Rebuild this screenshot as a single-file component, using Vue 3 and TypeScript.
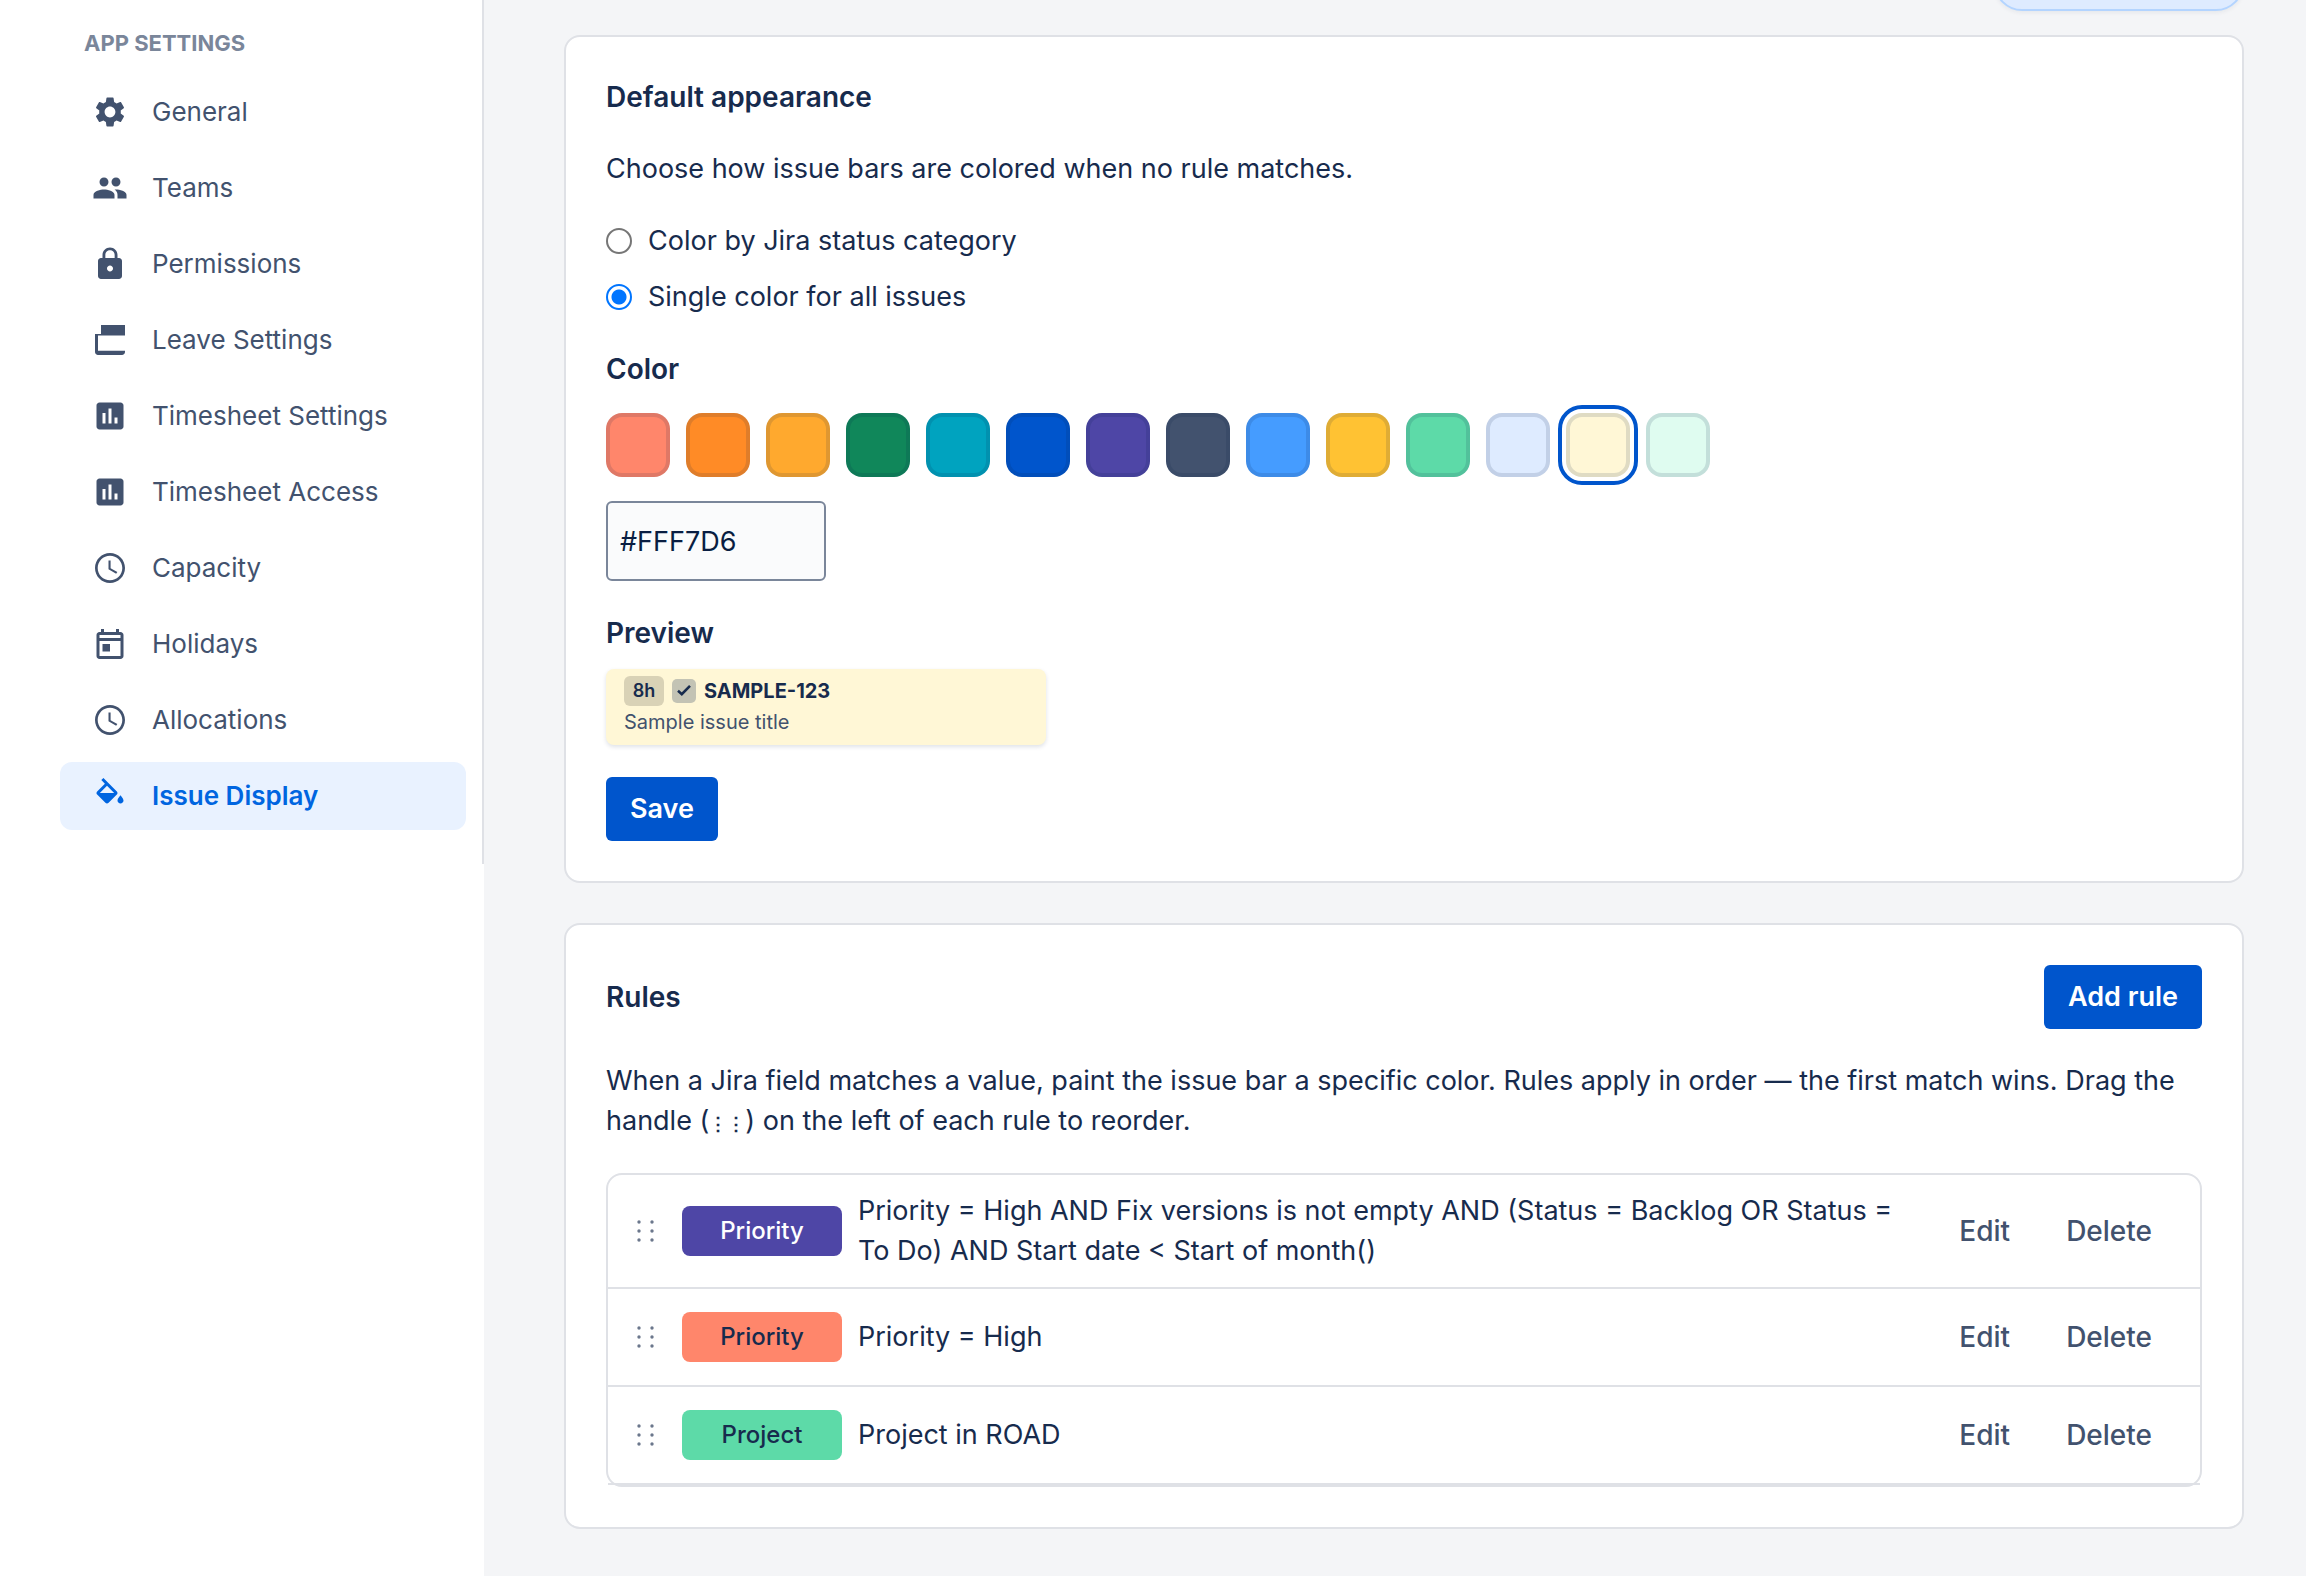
<script setup lang="ts">
import { ref } from 'vue'

interface NavItem {
  label: string
  icon: string
  active?: boolean
}

interface Rule {
  id: number
  badge: string
  color: string
  ink: string
  text: string
}

const clock =
  'M11.99 2C6.47 2 2 6.48 2 12s4.47 10 9.99 10C17.52 22 22 17.52 22 12S17.52 2 11.99 2zM12 20.2c-4.53 0-8.2-3.67-8.2-8.2S7.47 3.8 12 3.8s8.2 3.67 8.2 8.2-3.67 8.2-8.2 8.2zM12.4 7H11v5.9l5.1 3 .8-1.2-4.5-2.6z'
const chart =
  'M19 3H5c-1.1 0-2 .9-2 2v14c0 1.1.9 2 2 2h14c1.1 0 2-.9 2-2V5c0-1.1-.9-2-2-2zM9 17H7v-7h2v7zm4 0h-2V7h2v10zm4 0h-2v-4h2v4z'

const nav: NavItem[] = [
  {
    label: 'General',
    icon: 'M19.14 12.94c.04-.3.06-.61.06-.94 0-.32-.02-.64-.07-.94l2.03-1.58c.18-.14.23-.41.12-.61l-1.92-3.32c-.12-.22-.37-.29-.59-.22l-2.39.96c-.5-.38-1.03-.7-1.62-.94l-.36-2.54c-.04-.24-.24-.41-.48-.41h-3.84c-.24 0-.43.17-.47.41l-.36 2.54c-.59.24-1.13.57-1.62.94l-2.39-.96c-.22-.08-.47 0-.59.22L2.74 8.87c-.12.21-.08.47.12.61l2.03 1.58c-.05.3-.09.63-.09.94s.02.64.07.94l-2.03 1.58c-.18.14-.23.41-.12.61l1.92 3.32c.12.22.37.29.59.22l2.39-.96c.5.38 1.03.7 1.62.94l.36 2.54c.05.24.24.41.48.41h3.84c.24 0 .44-.17.47-.41l.36-2.54c.59-.24 1.13-.56 1.62-.94l2.39.96c.22.08.47 0 .59-.22l1.92-3.32c.12-.22.07-.47-.12-.61l-2.01-1.58zM12 15.6c-1.98 0-3.6-1.62-3.6-3.6s1.62-3.6 3.6-3.6 3.6 1.62 3.6 3.6-1.62 3.6-3.6 3.6z',
  },
  {
    label: 'Teams',
    icon: 'M16 11c1.66 0 2.99-1.34 2.99-3S17.66 5 16 5c-1.66 0-3 1.34-3 3s1.34 3 3 3zm-8 0c1.66 0 2.99-1.34 2.99-3S9.66 5 8 5C6.34 5 5 6.34 5 8s1.34 3 3 3zm0 2c-2.33 0-7 1.17-7 3.5V19h14v-2.5c0-2.33-4.67-3.5-7-3.5zm8 0c-.29 0-.62.02-.97.05 1.16.84 1.97 1.97 1.97 3.45V19h6v-2.5c0-2.33-4.67-3.5-7-3.5z',
  },
  {
    label: 'Permissions',
    icon: 'M18 8h-1V6c0-2.76-2.24-5-5-5S7 3.24 7 6v2H6c-1.1 0-2 .9-2 2v10c0 1.1.9 2 2 2h12c1.1 0 2-.9 2-2V10c0-1.1-.9-2-2-2zm-6 9c-1.1 0-2-.9-2-2s.9-2 2-2 2 .9 2 2-.9 2-2 2zm3.1-9H8.9V6c0-1.71 1.39-3.1 3.1-3.1s3.1 1.39 3.1 3.1v2z',
  },
  {
    label: 'Leave Settings',
    icon: 'M6 2h16v7H4v10.2h18V20c0 1.1-.9 2-2 2H4c-1.1 0-2-.9-2-2V8h4z',
  },
  { label: 'Timesheet Settings', icon: chart },
  { label: 'Timesheet Access', icon: chart },
  { label: 'Capacity', icon: clock },
  {
    label: 'Holidays',
    icon: 'M19 4h-1V2h-2v2H8V2H6v2H5c-1.11 0-2 .9-2 2v14c0 1.1.89 2 2 2h14c1.1 0 2-.9 2-2V6c0-1.1-.9-2-2-2zm0 16H5V10h14v10zm0-12H5V6h14v2zM7 12h5v5H7z',
  },
  { label: 'Allocations', icon: clock },
  {
    label: 'Issue Display',
    icon: 'M16.56 8.94L7.62 0 6.21 1.41l2.38 2.38-5.15 5.15c-.59.59-.59 1.54 0 2.12l5.5 5.5c.29.29.68.44 1.06.44s.77-.15 1.06-.44l5.5-5.5c.59-.58.59-1.53 0-2.12zM5.21 10L10 5.21 14.79 10H5.21zM19 11.5s-2 2.17-2 3.5c0 1.1.9 2 2 2s2-.9 2-2c0-1.33-2-3.5-2-3.5z',
    active: true,
  },
]

const swatches: string[] = [
  '#FF866B', '#FF8B26', '#FFA92E', '#10875A', '#00A3BF', '#0055CC', '#4E46A6',
  '#42526E', '#459CFF', '#FFC233', '#5DDAA8', '#DEEBFF', '#FFF7D6', '#DFFCF0',
]

const rules: Rule[] = [
  {
    id: 1,
    badge: 'Priority',
    color: '#4E46A6',
    ink: '#FFFFFF',
    text: 'Priority = High AND Fix versions is not empty AND (Status = Backlog OR Status = To Do) AND Start date < Start of month()',
  },
  { id: 2, badge: 'Priority', color: '#FF866B', ink: '#172B4D', text: 'Priority = High' },
  { id: 3, badge: 'Project', color: '#5DDAA8', ink: '#172B4D', text: 'Project in ROAD' },
]

const mode = ref<'status' | 'single'>('single')
const color = ref('#FFF7D6')
</script>

<template>
  <div class="page">
    <aside class="side">
      <nav class="nav" aria-label="App settings">
        <h2 class="nav-title">APP SETTINGS</h2>
        <a
          v-for="item in nav"
          :key="item.label"
          href="#"
          class="nav-item"
          :class="{ active: item.active }"
        >
          <svg class="nav-icon" viewBox="0 0 24 24" aria-hidden="true">
            <path :d="item.icon" fill="currentColor" fill-rule="evenodd" />
          </svg>
          <span>{{ item.label }}</span>
        </a>
      </nav>
    </aside>

    <main class="main">
      <div class="top-strip"><div class="pill"></div></div>

      <section class="card">
        <h3 class="title">Default appearance</h3>
        <p class="text">Choose how issue bars are colored when no rule matches.</p>
        <div class="radios">
          <label class="radio">
            <input v-model="mode" type="radio" name="mode" value="status" />
            <span>Color by Jira status category</span>
          </label>
          <label class="radio">
            <input v-model="mode" type="radio" name="mode" value="single" />
            <span>Single color for all issues</span>
          </label>
        </div>
        <div class="field">
          <label class="title" for="hex">Color</label>
          <div class="swatches">
            <button
              v-for="s in swatches"
              :key="s"
              type="button"
              class="swatch"
              :class="{ selected: s === color }"
              :style="{ backgroundColor: s }"
              :aria-label="s"
              @click="color = s"
            ></button>
          </div>
          <input id="hex" v-model="color" class="hex" type="text" />
        </div>
        <div class="preview">
          <h3 class="title">Preview</h3>
          <div class="bar" :style="{ backgroundColor: color }">
            <div class="bar-head">
              <span class="hours">8h</span>
              <span class="check">
                <svg viewBox="0 0 24 24" aria-hidden="true">
                  <path d="M6 11.8l3.8 3.4L18 6.8" fill="none" stroke="currentColor" stroke-width="2.6" />
                </svg>
              </span>
              <span class="key">SAMPLE-123</span>
            </div>
            <div class="bar-title">Sample issue title</div>
          </div>
        </div>
        <button type="button" class="primary">Save</button>
      </section>

      <section class="card">
        <header class="card-head">
          <h3 class="title">Rules</h3>
          <button type="button" class="primary">Add rule</button>
        </header>
        <p class="text">
          When a Jira field matches a value, paint the issue bar a specific color. Rules apply in
          order — the first match wins. Drag the handle (<span class="grip">⋮⋮</span>) on the left
          of each rule to reorder.
        </p>
        <ul class="rules">
          <li v-for="rule in rules" :key="rule.id" class="rule">
            <button type="button" class="handle" aria-label="Reorder rule">
              <svg viewBox="0 0 26 26" aria-hidden="true">
                <g fill="#6B778C">
                  <circle cx="7" cy="4" r="1.7" /><circle cx="20" cy="4" r="1.7" />
                  <circle cx="7" cy="13" r="1.7" /><circle cx="20" cy="13" r="1.7" />
                  <circle cx="7" cy="22" r="1.7" /><circle cx="20" cy="22" r="1.7" />
                </g>
              </svg>
            </button>
            <span class="badge" :style="{ backgroundColor: rule.color, color: rule.ink }">{{ rule.badge }}</span>
            <span class="rule-text">{{ rule.text }}</span>
            <span class="actions">
              <button type="button" class="subtle">Edit</button>
              <button type="button" class="subtle">Delete</button>
            </span>
          </li>
        </ul>
      </section>
    </main>
  </div>
</template>

<style>
body {
  margin: 0;
  background: #f4f5f7;
}
</style>

<style scoped>
.page {
  display: flex;
  min-height: 100vh;
  font-family: Inter, 'Liberation Sans', sans-serif;
  font-size: 27px;
  line-height: 40px;
  color: #172b4d;
}
.page * {
  box-sizing: border-box;
}
h2,
h3,
p,
ul {
  margin: 0;
  padding: 0;
}
button,
input {
  font: inherit;
  margin: 0;
}
button {
  cursor: pointer;
}

.side {
  flex: 0 0 484px;
  background: #fff;
}
.nav {
  display: flex;
  flex-direction: column;
  gap: 8px;
  padding: 27px 16px 34px 60px;
  border-right: 2px solid #dfe1e6;
}
.nav-title {
  padding: 0 24px 11px;
  font-size: 22px;
  line-height: 32px;
  font-weight: 700;
  color: #7a869a;
}
.nav-item {
  display: flex;
  align-items: center;
  gap: 24px;
  height: 68px;
  padding: 0 32px;
  border-radius: 12px;
  font-size: 26px;
  color: #42526e;
  text-decoration: none;
}
.nav-item.active {
  background: #e9f2ff;
  color: #0065e0;
  font-weight: 600;
}
.nav-icon {
  width: 36px;
  height: 36px;
}

.main {
  flex: 1;
  min-width: 0;
  display: flex;
  flex-direction: column;
  gap: 40px;
  padding: 0 62px 40px 80px;
}
.top-strip {
  display: flex;
  align-items: flex-end;
  justify-content: flex-end;
  height: 11px;
  margin-bottom: -16px;
}
.pill {
  flex: none;
  width: 250px;
  height: 56px;
  border: 2px solid #b3d4ff;
  border-radius: 28px;
  background: #deebff;
  box-shadow: 0 2px 4px rgba(9, 30, 66, 0.06);
}
.card {
  display: flex;
  flex-direction: column;
  align-items: flex-start;
  gap: 32px;
  padding: 40px;
  background: #fff;
  border: 2px solid #dfe1e6;
  border-radius: 16px;
}
.title {
  font-size: 28px;
  line-height: 40px;
  font-weight: 600;
}
.radios {
  display: flex;
  flex-direction: column;
  gap: 16px;
}
.radio {
  display: flex;
  align-items: center;
  gap: 16px;
}
.radio input {
  appearance: none;
  width: 26px;
  height: 26px;
  border: 2px solid #767676;
  border-radius: 50%;
  background: #fff;
}
.radio input:checked {
  border-color: #0075ff;
  background: radial-gradient(circle, #0075ff 7px, #fff 8px);
}
.field {
  display: flex;
  flex-direction: column;
  align-items: flex-start;
  gap: 24px;
}
.swatches {
  display: flex;
  flex-wrap: wrap;
  gap: 16px;
}
.swatch {
  width: 64px;
  height: 64px;
  padding: 0;
  border: 4px solid rgba(9, 30, 66, 0.13);
  border-radius: 16px;
}
.swatch.selected {
  outline: 4px solid #0055cc;
  outline-offset: 4px;
}
.hex {
  width: 220px;
  height: 80px;
  padding: 0 12px;
  border: 2px solid #7a869a;
  border-radius: 6px;
  background: #fafbfc;
  color: #091e42;
}
.preview {
  display: flex;
  flex-direction: column;
  gap: 16px;
}
.bar {
  width: 440px;
  height: 76px;
  padding: 7px 18px;
  border-radius: 8px;
  box-shadow: 0 2px 4px rgba(9, 30, 66, 0.13);
}
.bar-head {
  display: flex;
  align-items: center;
  gap: 8px;
  height: 30px;
}
.hours {
  width: 40px;
  border-radius: 6px;
  background: rgba(0, 0, 0, 0.15);
  font-size: 18px;
  line-height: 30px;
  font-weight: 600;
  text-align: center;
}
.check {
  display: flex;
  width: 24px;
  height: 24px;
  border-radius: 5px;
  background: #c3c3b4;
}
.key {
  font-size: 20px;
  font-weight: 700;
}
.bar-title {
  font-size: 20px;
  line-height: 32px;
  color: #42526e;
}
.primary {
  height: 64px;
  padding: 0 24px;
  border: 0;
  border-radius: 6px;
  background: #0055cc;
  color: #fff;
  font-weight: 600;
}
.card-head {
  align-self: stretch;
  display: flex;
  align-items: center;
  justify-content: space-between;
}
.grip {
  font-family: 'DejaVu Sans Mono', monospace;
  font-size: 18px;
  font-weight: 700;
  line-height: 1;
}
.rules {
  align-self: stretch;
  list-style: none;
  border: 2px solid #dfe1e6;
  border-radius: 16px;
}
.rule {
  display: flex;
  align-items: center;
  gap: 16px;
  padding: 16px 24px;
  border-bottom: 2px solid #dfe1e6;
}
.handle {
  display: flex;
  flex: none;
  width: 34px;
  padding: 0;
  border: 0;
  background: none;
}
.handle svg {
  width: 26px;
  height: 26px;
}
.badge {
  flex: none;
  width: 160px;
  border-radius: 8px;
  font-size: 24px;
  line-height: 50px;
  font-weight: 500;
  text-align: center;
}
.rule-text {
  flex: 1;
  min-width: 0;
}
.actions {
  display: flex;
  gap: 8px;
}
.subtle {
  height: 64px;
  padding: 0 24px;
  border: 0;
  background: none;
  color: #42526e;
  font-size: 28px;
  font-weight: 500;
}
</style>
